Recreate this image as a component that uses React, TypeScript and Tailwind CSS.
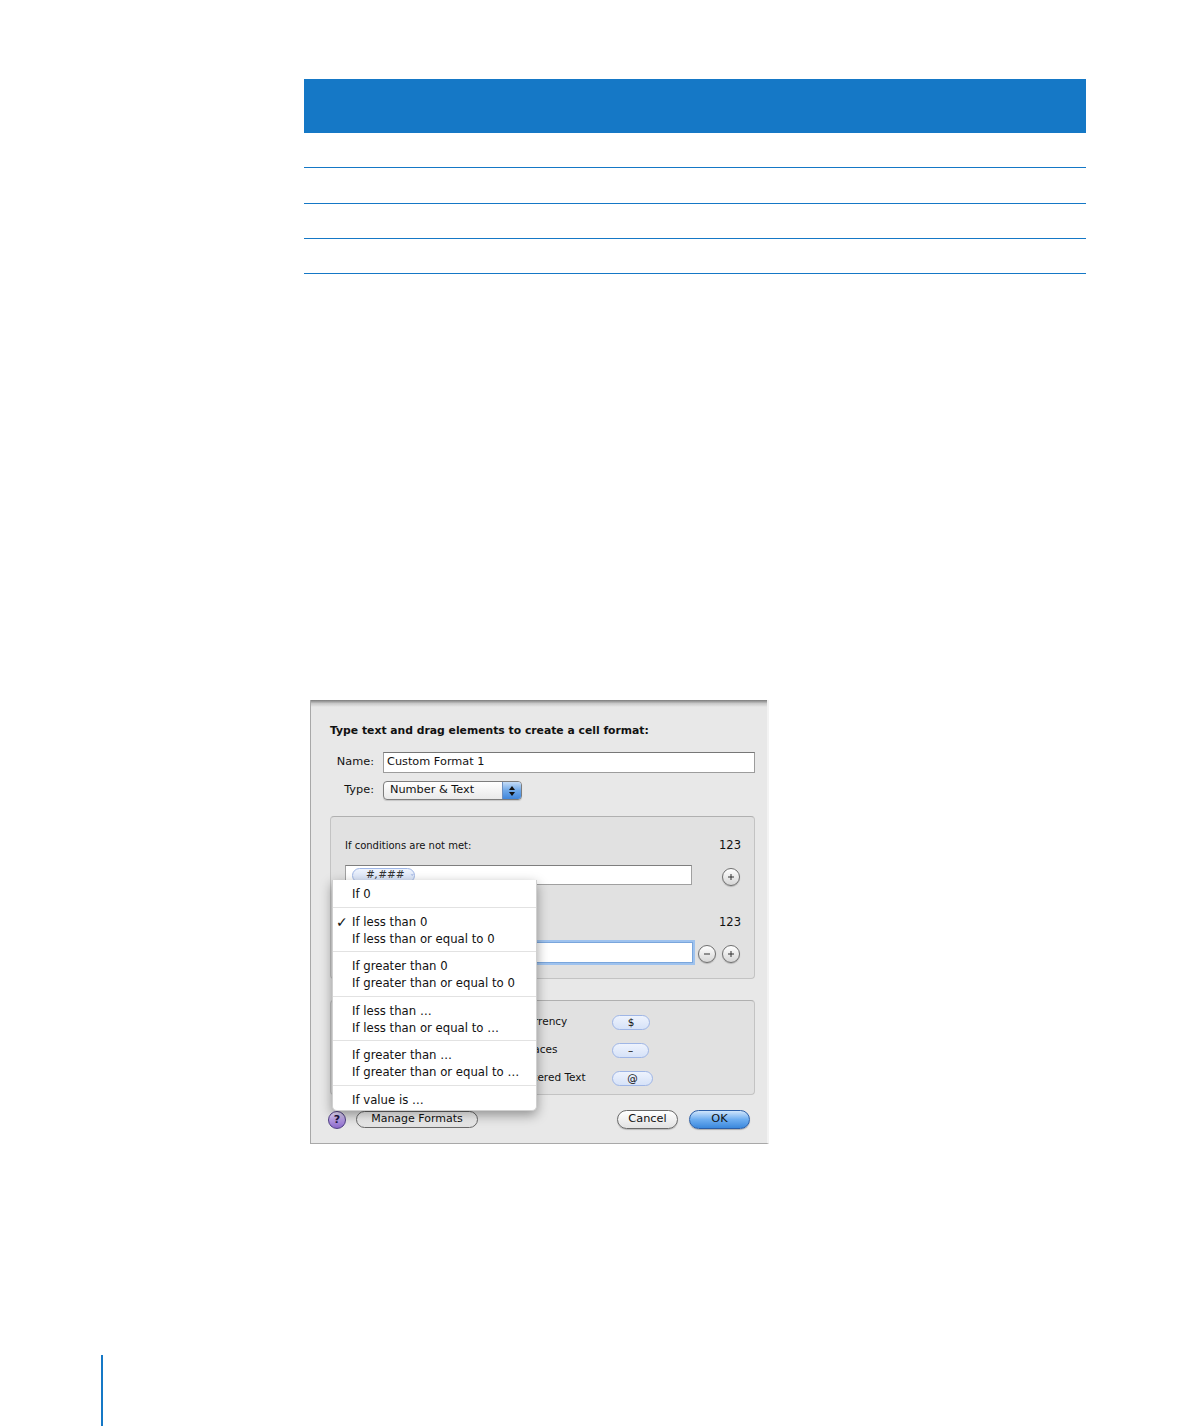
import React from "react";

const Circle = ({ minus }: { minus?: boolean }) => (
  <div className="w-[18px] h-[18px] rounded-full border border-[#6f6f6f] bg-gradient-to-b from-white to-[#d6d6d6] flex items-center justify-center shadow-[0_1px_1px_rgba(0,0,0,0.2)]">
    <svg width="10" height="10" viewBox="0 0 10 10">
      <line x1="2" y1="5" x2="8" y2="5" stroke="#333" strokeWidth="1" />
      {!minus && <line x1="5" y1="2" x2="5" y2="8" stroke="#333" strokeWidth="1" />}
    </svg>
  </div>
);

const Token = ({ children, w }: { children: React.ReactNode; w: string }) => (
  <div
    className={`${w} h-[15px] rounded-full border border-[#9fb6e6] bg-gradient-to-b from-[#eef3fd] to-[#d6e2f8] flex items-center justify-center text-[10.5px] leading-none text-[#111]`}
  >
    {children}
  </div>
);

const Item = ({ children, checked }: { children: React.ReactNode; checked?: boolean }) => (
  <div className="relative h-[17px] leading-[17px] pl-[19px] text-[11.7px] text-[#111] whitespace-nowrap">
    {checked && <span className="absolute left-[3px] top-0 text-[14px] leading-[17px]">✓</span>}
    {children}
  </div>
);

const Sep = () => <div className="mt-[3.6px] mb-[6px] h-px bg-[#e2e2e2]" />;

export default function App() {
  return (
    <div className="relative w-[1188px] h-[1426px] bg-white font-['DejaVu_Sans','Liberation_Sans',sans-serif] overflow-hidden">
      {/* table */}
      <div className="ml-[304px] pt-[79px] w-[782px]">
        <div className="h-[54px] bg-[#1578c6]" />
        <div className="h-[35px] border-b border-[#1578c6]" />
        <div className="h-[36px] border-b border-[#1578c6]" />
        <div className="h-[35px] border-b border-[#1578c6]" />
        <div className="h-[35px] border-b border-[#1578c6]" />
      </div>

      {/* dialog */}
      <div className="relative ml-[310px] mt-[426px] w-[459px] h-[444px] bg-[#e8e8e8] border-l border-b border-[#a8a8a8] border-r-[2px] border-r-[#f3f3f3]">
        <div className="h-[7px] bg-gradient-to-b from-[#7c7c7c] via-[#c8c8c8] to-[#e8e8e8]" />
        <div className="pl-[19px] pr-[12px] pt-[17px]">
          <div className="h-[14px] leading-[14px] text-[10.8px] font-bold text-[#111] whitespace-nowrap">
            Type text and drag elements to create a cell format:
          </div>

          {/* name row */}
          <div className="mt-[14px] flex items-center h-[21px]">
            <div className="w-[44px] text-right text-[11.3px] text-[#111]">Name:</div>
            <div className="ml-[9px] w-[372px] h-[21px] bg-white border border-[#9c9c9c] border-t-[#777] flex items-center pl-[3px] text-[11.3px] text-[#111]">
              Custom Format 1
            </div>
          </div>

          {/* type row */}
          <div className="mt-[8px] flex items-center h-[19px]">
            <div className="w-[44px] text-right text-[11.3px] text-[#111]">Type:</div>
            <div className="ml-[9px] w-[139px] h-[19px] rounded-[4px] border border-[#7d7d7d] bg-gradient-to-b from-white to-[#e9e9e9] flex items-stretch overflow-hidden shadow-[0_1px_1px_rgba(0,0,0,0.15)]">
              <div className="flex-1 flex items-center pl-[6px] text-[11.3px] text-[#111] whitespace-nowrap">Number &amp; Text</div>
              <div className="w-[19px] border-l border-[#6c8fc0] bg-gradient-to-b from-[#c4dcf7] via-[#6fa8e8] to-[#3f86dc] flex flex-col items-center justify-center gap-[2px]">
                <svg width="6" height="4" viewBox="0 0 6 4"><path d="M3 0 L6 4 L0 4 Z" fill="#111" /></svg>
                <svg width="6" height="4" viewBox="0 0 6 4"><path d="M0 0 L6 0 L3 4 Z" fill="#111" /></svg>
              </div>
            </div>
          </div>

          {/* upper panel */}
          <div className="mt-[16px] w-[425px] h-[163px] rounded-[4px] border border-[#c3c3c3] border-t-[#b0b0b0] bg-[#e1e1e1] pl-[14px] pr-[13px] pt-[21px]">
            <div className="flex items-center h-[14px]">
              <div className="text-[10px] text-[#111]">If conditions are not met:</div>
              <div className="ml-auto text-[11.5px] text-[#111] pt-[1px]">123</div>
            </div>
            <div className="mt-[13px] flex items-center h-[20px]">
              <div className="w-[347px] h-[20px] bg-white border border-[#a0a0a0] border-t-[#7e7e7e] flex items-center pl-[6px]">
                <div className="w-[63px] h-[15px] rounded-full border border-[#9fb6e6] bg-gradient-to-b from-[#eef3fd] to-[#d6e2f8] flex items-center pl-[13px] text-[10.5px] italic text-[#333] gap-[5px]">
                  #,###
                  <svg width="8" height="8" viewBox="0 0 8 8"><path d="M1 2.5 L7 2.5 L4 6 Z" fill="#a9bde6" /></svg>
                </div>
              </div>
              <div className="ml-auto pt-[3px] mr-[1px]">
                <Circle />
              </div>
            </div>
            <div className="mt-[31px] flex items-center justify-end h-[14px]">
              <div className="text-[11.5px] text-[#111]">123</div>
            </div>
            <div className="mt-[12px] flex items-center h-[21px]">
              <div className="w-[348px] h-[21px] bg-white border border-[#7aa6dc] shadow-[0_0_0_2px_#9ec2ee] flex items-center pl-[6px]" />
              <div className="ml-auto flex items-center gap-[6px] pt-[2px] mr-[1px]">
                <Circle minus />
                <Circle />
              </div>
            </div>
          </div>

          {/* lower panel */}
          <div className="mt-[21px] w-[425px] h-[95px] rounded-[4px] border border-[#c3c3c3] border-t-[#b0b0b0] bg-[#e1e1e1] pl-[15px] pt-[7px]">
            {[
              ["Currency", "$", "w-[38px]"],
              ["Spaces", "–", "w-[37px]"],
              ["Entered Text", "@", "w-[41px]"],
            ].map((r) => (
              <div key={r[0]} className="h-[28px] flex items-center text-[10.5px] text-[#111]">
                <div className="ml-[174px] w-[92px]">{r[0]}</div>
                <Token w={r[2]}>{r[1]}</Token>
              </div>
            ))}
          </div>

          {/* buttons */}
          <div className="mt-[15px] flex items-center h-[19px] pr-[5px]">
            <div className="ml-[-2px] w-[18px] h-[18px] rounded-full border border-[#4e3d85] bg-gradient-to-b from-[#efe6ff] via-[#b59ae4] to-[#8a67c9] flex items-center justify-center text-[11px] font-bold text-[#1d1440] leading-none">
              ?
            </div>
            <div className="ml-[10px] w-[122px] h-[17px] rounded-full border border-[#6a6a6a] bg-gradient-to-b from-white to-[#e2e2e2] flex items-center justify-center text-[11px] text-[#111] whitespace-nowrap">
              Manage Formats
            </div>
            <div className="ml-auto w-[61px] h-[19px] rounded-full border border-[#6a6a6a] bg-gradient-to-b from-white to-[#e2e2e2] flex items-center justify-center text-[11.3px] text-[#111] shadow-[0_1px_1px_rgba(0,0,0,0.2)]">
              Cancel
            </div>
            <div className="ml-[11px] w-[61px] h-[19px] rounded-full border border-[#2c5fa8] bg-gradient-to-b from-[#cfe5fb] via-[#6eaef0] to-[#3a88dc] flex items-center justify-center text-[11.3px] text-[#111] shadow-[0_1px_1px_rgba(0,0,0,0.25)]">
              OK
            </div>
          </div>
        </div>

        {/* popup menu */}
        <div className="absolute left-[21px] top-[180px] w-[205px] bg-white rounded-b-[5px] shadow-[0_4px_12px_rgba(0,0,0,0.38)] border border-[#d0d0d0] border-t-0 pt-[6px] pb-[1px]">
          <Item>If 0</Item>
          <Sep />
          <Item checked>If less than 0</Item>
          <Item>If less than or equal to 0</Item>
          <Sep />
          <Item>If greater than 0</Item>
          <Item>If greater than or equal to 0</Item>
          <Sep />
          <Item>If less than …</Item>
          <Item>If less than or equal to …</Item>
          <Sep />
          <Item>If greater than …</Item>
          <Item>If greater than or equal to …</Item>
          <Sep />
          <Item>If value is …</Item>
        </div>
      </div>

      {/* left margin rule */}
      <div className="ml-[101px] mt-[211px] w-[2px] h-[71px] bg-[#1578c6]" />
    </div>
  );
}
